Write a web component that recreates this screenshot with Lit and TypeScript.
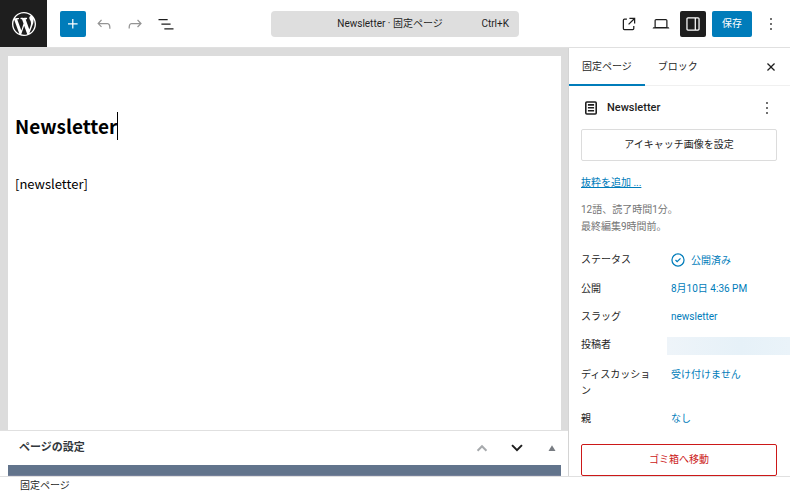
import { LitElement, html, css, svg } from "lit";
import { customElement, property } from "lit/decorators.js";

const ICONS: Record<string, string> = {
  plus: "M11 12.5V17.5H12.5V12.5H17.5V11H12.5V6H11V11H6V12.5H11Z",
  undo: "M18.3 11.7c-.6-.6-1.4-.9-2.3-.9H6.7l2.9-3.3-1.1-1-4.5 5L8.5 16l1-1-2.7-2.7H16c.5 0 .9.2 1.3.5 1 1 1 3.4 1 4.5v.3h1.5v-.2c0-1.5 0-4.3-1.5-5.7z",
  redo: "M15.6 6.5l-1.1 1 2.9 3.3H8c-.9 0-1.7.3-2.3.9-1.4 1.5-1.4 4.2-1.4 5.6v.2h1.5v-.3c0-1.1 0-3.5 1-4.5.3-.3.7-.5 1.3-.5h9.2L14.5 15l1.1 1.1 4.6-4.6-4.6-5z",
  list: "M3 6h11v1.5H3V6Zm3.5 5.5h11V13h-11v-1.5ZM21 17H10v1.5h11V17Z",
  external: "M19.5 4.5h-7V6h4.44l-5.97 5.97 1.06 1.06L18 7.06v4.44h1.5v-7Zm-13 1a2 2 0 0 0-2 2v10a2 2 0 0 0 2 2h10a2 2 0 0 0 2-2v-3H17v3a.5.5 0 0 1-.5.5h-10a.5.5 0 0 1-.5-.5v-10a.5.5 0 0 1 .5-.5h3V5.5h-3Z",
  desktop: "M20.5 16h-.7V8c0-1.1-.9-2-2-2H6.2c-1.1 0-2 .9-2 2v8h-.7c-.8 0-1.5.7-1.5 1.5h20c0-.8-.7-1.5-1.5-1.5zM5.7 8c0-.3.2-.5.5-.5h11.6c.3 0 .5.2.5.5v7.6H5.7V8z",
  drawer: "M18 4H6c-1.1 0-2 .9-2 2v12c0 1.1.9 2 2 2h12c1.1 0 2-.9 2-2V6c0-1.1-.9-2-2-2zm-4 14.5H6c-.3 0-.5-.2-.5-.5V6c0-.3.2-.5.5-.5h8v13zm4.5-.5c0 .3-.2.5-.5.5h-2.5v-13H18c.3 0 .5.2.5.5v12z",
  more: "M13 19h-2v-2h2v2zm0-6h-2v-2h2v2zm0-6h-2V5h2v2z",
  close: "M12 13.06l3.712 3.713 1.061-1.06L13.061 12l3.712-3.712-1.06-1.06L12 10.938 8.288 7.227l-1.061 1.06L10.939 12l-3.712 3.712 1.06 1.061L12 13.061z",
  page: "M15.7 7.3H8.3V9.2h7.4V7.3ZM8.3 10.8h7.4v1.9H8.3V10.8Zm7.4 3.5H8.3v1.9h7.4v-1.9ZM17 3.8H7A2.2 2.2 0 0 0 4.8 6v12A2.2 2.2 0 0 0 7 20.2h10a2.2 2.2 0 0 0 2.2-2.2V6A2.2 2.2 0 0 0 17 3.8ZM7 5.7h10a.3.3 0 0 1 .3.3v12a.3.3 0 0 1-.3.3H7a.3.3 0 0 1-.3-.3V6a.3.3 0 0 1 .3-.3Z",
  published: "M12 5.5a6.5 6.5 0 1 0 0 13 6.5 6.5 0 0 0 0-13ZM4 12a8 8 0 1 1 16 0 8 8 0 0 1-16 0Zm11.53-1.47-1.06-1.06L11 12.94l-1.47-1.47-1.06 1.06L11 15.06l4.53-4.53Z",
  up: "M5.8 14.4L12 8.2l6.2 6.2-1.7 1.7L12 11.6l-4.5 4.5z",
  down: "M5.2 9.4L12 16.2l6.8-6.8-1.7-1.7L12 12.8 6.9 7.7z",
  triangle: "M7.8 15.5L12 8.7l4.2 6.8z",
};

const WP_LOGO =
  "M20 10c0-5.51-4.49-10-10-10C4.48 0 0 4.49 0 10c0 5.52 4.48 10 10 10 5.51 0 10-4.48 10-10zM7.78 15.37L4.37 6.22c.55-.02 1.17-.08 1.17-.08.5-.06.44-1.13-.06-1.11 0 0-1.45.11-2.37.11-.18 0-.37 0-.58-.01C4.12 2.69 6.87 1.11 10 1.11c2.33 0 4.45.87 6.05 2.34-.68-.11-1.65.39-1.65 1.58 0 .74.45 1.36.9 2.1.35.61.55 1.36.55 2.46 0 1.49-1.4 5-1.4 5l-3.03-8.37c.54-.02.82-.17.82-.17.5-.05.44-1.25-.06-1.22 0 0-1.44.12-2.38.12-.87 0-2.33-.12-2.33-.12-.5-.03-.56 1.2-.06 1.22l.92.08 1.26 3.41zM17.41 10c.24-.64.74-1.87.43-4.25.7 1.29 1.05 2.71 1.05 4.25 0 3.29-1.73 6.24-4.4 7.78.97-2.59 1.94-5.2 2.92-7.78zM6.1 18.09C3.12 16.65 1.11 13.53 1.11 10c0-1.3.23-2.48.72-3.59C3.25 10.3 4.67 14.2 6.1 18.09zm4.03-6.63l2.58 6.98c-.86.29-1.76.45-2.71.45-.79 0-1.57-.11-2.29-.33.81-2.38 1.62-4.74 2.42-7.1z";

@customElement("wp-icon")
class WpIcon extends LitElement {
  @property() name = "plus";
  static styles = css`
    :host { display: block; flex: none; width: 20px; height: 20px; }
    .glyph { display: block; width: 100%; height: 100%; fill: currentColor; fill-rule: evenodd; }
  `;
  render() {
    return html`<svg class="glyph" viewBox="0 0 24 24" aria-hidden="true">${svg`<path d=${ICONS[this.name]}></path>`}</svg>`;
  }
}

const control = css`
  :host, * { box-sizing: border-box; }
  button {
    font: inherit; color: inherit; margin: 0; padding: 0; border: 0; background: none;
    display: flex; align-items: center; justify-content: center; border-radius: 2px; cursor: pointer;
  }
`;

@customElement("editor-header")
class EditorHeader extends LitElement {
  static styles = [control, css`
    :host {
      display: grid; grid-template-columns: 1fr minmax(0, 248px) 1fr; align-items: center;
      height: 48px; border-bottom: 1px solid #e0e0e0; background: #fff;
    }
    .tools { display: flex; align-items: center; gap: 6px; height: 47px; }
    .left { gap: 5px; }
    .logo { width: 47px; height: 47px; background: #1e1e1e; color: #fff; display: flex; align-items: center; justify-content: center; margin-right: 8px; }
    .mark { width: 24px; height: 24px; fill: #fff; }
    .tool { width: 26px; height: 26px; }
    .off { color: #949494; }
    .primary { background: #007cba; color: #fff; }
    .dark { background: #1e1e1e; color: #fff; }
    .command { display: grid; grid-template-columns: 1fr auto 1fr; width: 100%; height: 26px; background: #dedede; border-radius: 4px; padding: 0 10px 0 0; }
    .title { grid-column: 2; }
    .keys { justify-self: end; }
    .right { justify-content: flex-end; padding-right: 6px; }
    .save { height: 26px; padding: 0 10px; }
  `];
  render() {
    return html`
      <div class="tools left">
        <a class="logo" href="#" aria-label="WordPress"><svg class="mark" viewBox="0 0 20 20"><path d=${WP_LOGO}></path></svg></a>
        <button class="tool primary" aria-label="ブロックを追加"><wp-icon name="plus"></wp-icon></button>
        <button class="tool off" aria-label="元に戻す"><wp-icon name="undo"></wp-icon></button>
        <button class="tool off" aria-label="やり直す"><wp-icon name="redo"></wp-icon></button>
        <button class="tool" aria-label="リスト表示"><wp-icon name="list"></wp-icon></button>
      </div>
      <button class="command"><span class="title">Newsletter · 固定ページ</span><span class="keys">Ctrl+K</span></button>
      <div class="tools right">
        <button class="tool" aria-label="固定ページを表示"><wp-icon name="external"></wp-icon></button>
        <button class="tool" aria-label="表示"><wp-icon name="desktop"></wp-icon></button>
        <button class="tool dark" aria-label="設定"><wp-icon name="drawer"></wp-icon></button>
        <button class="save primary">保存</button>
        <button class="tool" aria-label="オプション"><wp-icon name="more"></wp-icon></button>
      </div>`;
  }
}

@customElement("editor-canvas")
class EditorCanvas extends LitElement {
  static styles = [control, css`
    :host { display: flex; flex-direction: column; min-width: 0; min-height: 0; background: #dcdcdc; }
    .page { flex: 1; margin: 8px 7px 0 8px; padding: 56px 7px 0; background: #fff; color: #000; font-family: "Noto Sans CJK JP", sans-serif; }
    .heading { display: flex; align-items: center; margin: 0 0 33px; font-size: 19px; line-height: 28px; font-weight: 700; }
    .caret { width: 1px; height: 28px; background: #000; }
    .body { margin: 0; font-size: 13px; line-height: 22px; }
    .meta { flex: none; background: #fff; border-top: 1px solid #e0e0e0; }
    .bar { display: flex; align-items: center; height: 34px; padding: 0 6px 0 19px; }
    .label { flex: 1; margin: 0; font-size: 11px; font-weight: 700; color: #32373c; }
    .actions { display: flex; gap: 15px; }
    .off { color: #a7aaad; }
    .collapse { color: #787c82; }
    .strip { height: 11px; margin: 0 7px 0 8px; background: #62748c; border-bottom: 1px solid #75809a; }
  `];
  render() {
    return html`
      <div class="page">
        <h1 class="heading">Newsletter<span class="caret"></span></h1>
        <p class="body">[newsletter]</p>
      </div>
      <section class="meta">
        <div class="bar">
          <h2 class="label">ページの設定</h2>
          <div class="actions">
            <button class="off" aria-label="上に移動"><wp-icon name="up"></wp-icon></button>
            <button aria-label="下に移動"><wp-icon name="down"></wp-icon></button>
            <button class="collapse" aria-label="パネルを閉じる"><wp-icon name="triangle"></wp-icon></button>
          </div>
        </div>
        <div class="strip"></div>
      </section>`;
  }
}

@customElement("editor-sidebar")
class EditorSidebar extends LitElement {
  static styles = [control, css`
    :host { display: block; min-height: 0; overflow: hidden; background: #fff; border-left: 1px solid #d4d4d4; }
    .tabs { display: flex; align-items: stretch; height: 38px; padding-right: 9px; border-bottom: 1px solid #f0f0f0; }
    .tab { padding: 0 13px; height: 38px; border-radius: 0; }
    .current { border-bottom: 2px solid #007cba; padding-top: 2px; }
    .close { margin-left: auto; }
    .panel { padding: 12px 13px 0 12px; }
    .card { display: flex; align-items: center; gap: 6px; height: 20px; }
    .name { flex: 1; margin: 0; font-size: 11px; font-weight: 500; }
    .wide { width: 100%; height: 32px; }
    .image { margin-top: 11px; border: 1px solid #dcdcdc; }
    .link { display: inline-block; margin-top: 13px; line-height: 17px; color: #007cba; text-decoration: underline; }
    .info { margin: 10px 0 17px; line-height: 17px; color: #757575; }
    .rows { display: grid; grid-template-columns: 78px 1fr; gap: 12px; margin: 0; line-height: 16px; }
    .term { margin: 0; }
    .value { margin: 0; color: #007cba; }
    .status { margin-left: -3px; }
    .status button { gap: 3px; }
    .status wp-icon { margin: -2px 0 -1px; }
    .hidden { height: 18px; margin: 0 -13px 0 -4px; background: linear-gradient(90deg, #eef4f9, #e6f1f8 60%, #eaf3f9); }
    .trash { margin-top: 17px; border: 1px solid #cc1818; color: #cc1818; }
  `];
  render() {
    return html`
      <div class="tabs" role="tablist">
        <button class="tab current" role="tab" aria-selected="true">固定ページ</button>
        <button class="tab" role="tab" aria-selected="false">ブロック</button>
        <button class="close" aria-label="設定を閉じる"><wp-icon name="close"></wp-icon></button>
      </div>
      <div class="panel">
        <div class="card">
          <wp-icon name="page"></wp-icon>
          <h2 class="name">Newsletter</h2>
          <button aria-label="操作"><wp-icon name="more"></wp-icon></button>
        </div>
        <button class="wide image">アイキャッチ画像を設定</button>
        <a class="link" href="#">抜粋を追加 ...</a>
        <p class="info">12語、読了時間1分。<br />最終編集9時間前。</p>
        <dl class="rows">
          <dt class="term">ステータス</dt>
          <dd class="value status"><button><wp-icon name="published"></wp-icon>公開済み</button></dd>
          <dt class="term">公開</dt>
          <dd class="value"><button>8月10日 4:36 PM</button></dd>
          <dt class="term">スラッグ</dt>
          <dd class="value"><button>newsletter</button></dd>
          <dt class="term">投稿者</dt>
          <dd class="hidden"></dd>
          <dt class="term">ディスカッション</dt>
          <dd class="value"><button>受け付けません</button></dd>
          <dt class="term">親</dt>
          <dd class="value"><button>なし</button></dd>
        </dl>
        <button class="wide trash">ゴミ箱へ移動</button>
      </div>`;
  }
}

@customElement("app-root")
class AppRoot extends LitElement {
  static styles = css`
    :host, * { box-sizing: border-box; }
    :host {
      display: flex; flex-direction: column; height: 100vh; overflow: hidden; background: #fff; color: #1e1e1e;
      font-family: Roboto, "Noto Sans CJK JP", sans-serif; font-size: 10px; line-height: 16px;
    }
    .main { flex: 1; min-height: 0; display: grid; grid-template-columns: minmax(0, 1fr) 222px; grid-template-rows: minmax(0, 1fr); }
    .crumbs { flex: none; height: 20px; border-top: 1px solid #e0e0e0; padding: 1px 20px; }
  `;
  render() {
    return html`
      <editor-header></editor-header>
      <div class="main">
        <editor-canvas></editor-canvas>
        <editor-sidebar></editor-sidebar>
      </div>
      <footer class="crumbs">固定ページ</footer>`;
  }
}
